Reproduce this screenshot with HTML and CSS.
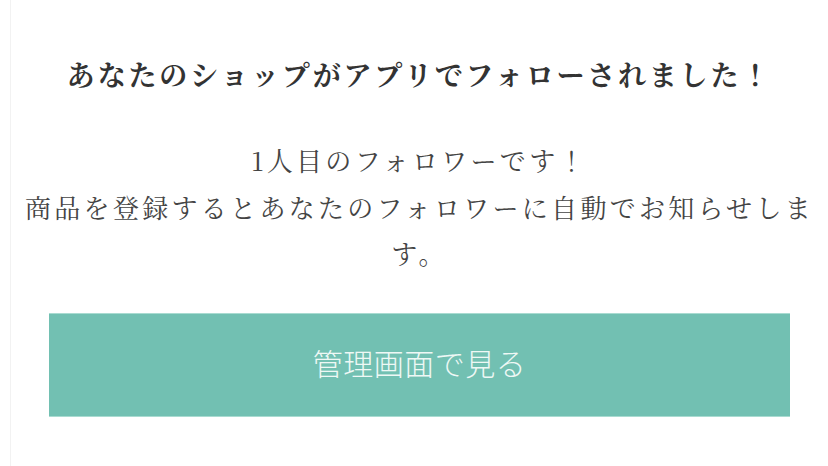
FILE: index.html
```html
<!DOCTYPE html>
<html lang="ja">
<head>
<meta charset="utf-8">
<link rel="stylesheet" href="styles.css">
</head>
<body>
<div class="page">
  <h1 class="title">あなたのショップがアプリでフォローされました！</h1>
  <p class="message">1人目のフォロワーです！<br>商品を登録するとあなたのフォロワーに自動でお知らせします。</p>
  <div class="action"><a class="button" href="#">管理画面で見る</a></div>
</div>
</body>
</html>
```

FILE: styles.css
```css
html, body {
  margin: 0;
  padding: 0;
  background: #ffffff;
}
.page {
  margin-left: 10px;
  border-left: 1px solid #f2f2f2;
  min-height: 466px;
  box-sizing: border-box;
  padding: 53px 11px 0 11px;
  font-family: "Noto Serif CJK JP", "Liberation Serif", "Noto Sans CJK JP", serif;
  text-align: center;
}
.title {
  margin: 0;
  font-size: 28px;
  line-height: 42px;
  font-weight: bold;
  letter-spacing: 2.8px;
  color: #333333;
}
.message {
  margin: 42px 0 0 0;
  font-size: 26px;
  line-height: 46.5px;
  letter-spacing: 3.3px;
  color: #444444;
  font-weight: normal;
}
.action {
  margin: 36px 27px 0 27px;
}
.button {
  display: block;
  height: 104px;
  box-sizing: border-box;
  background: #72c0b2;
  border-top: 1px solid #a9dbd1;
  border-bottom: 1px solid #a9dbd1;
  color: #eef8f5;
  font-family: "Noto Sans CJK JP", sans-serif;
  font-weight: 300;
  font-size: 30px;
  line-height: 96px;
  text-decoration: none;
  letter-spacing: 0.5px;
}
```
